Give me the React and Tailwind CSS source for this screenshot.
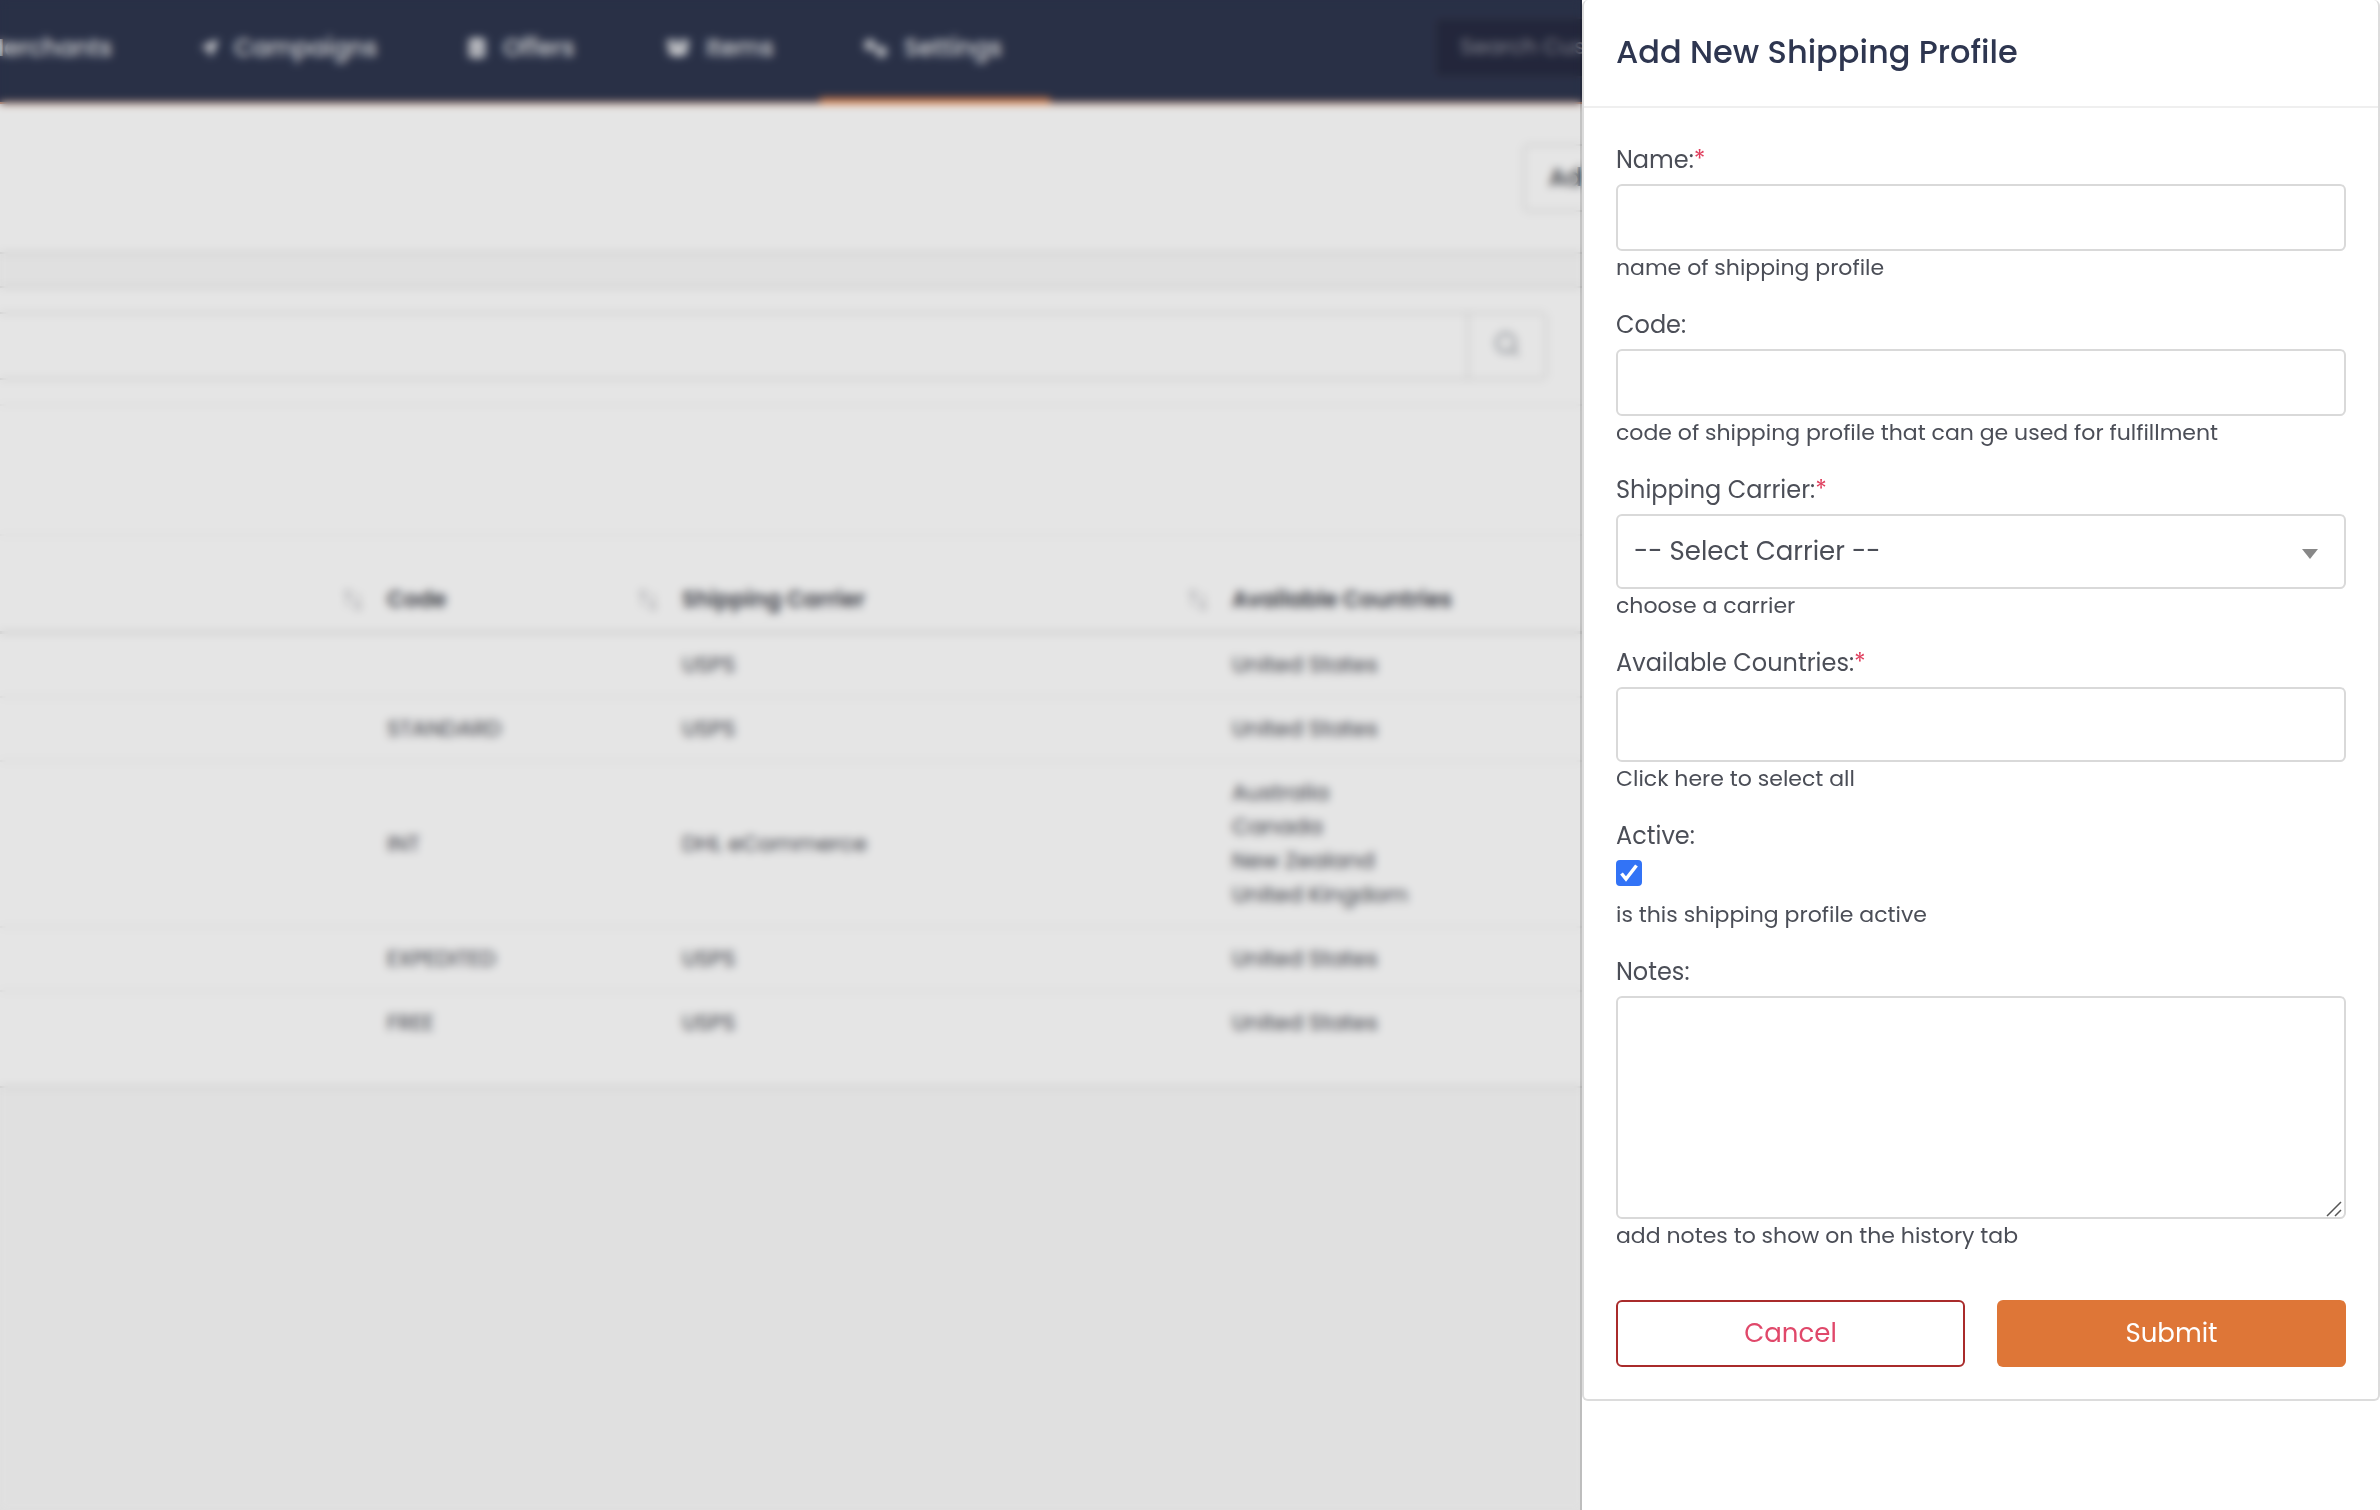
import { FaBoxOpen, FaDatabase, FaLocationArrow } from "react-icons/fa";
import { FaGears } from "react-icons/fa6";
import { Search } from "lucide-react";

const navItems = [
  { label: "Campaigns", icon: FaLocationArrow, width: "w-[269px] pl-12", size: "size-4" },
  { label: "Offers", icon: FaDatabase, width: "w-[199px] pl-11", size: "size-5" },
  { label: "Items", icon: FaBoxOpen, width: "w-[198px] pl-11", size: "size-6" },
  { label: "Settings", icon: FaGears, width: "w-[230px] pl-11", size: "size-6", active: true },
];

const rows = [
  { code: "", carrier: "USPS", countries: ["United States"] },
  { code: "STANDARD", carrier: "USPS", countries: ["United States"] },
  { code: "INT", carrier: "DHL eCommerce", countries: ["Australia", "Canada", "New Zealand", "United Kingdom"] },
  { code: "EXPEDITED", carrier: "USPS", countries: ["United States"] },
  { code: "FREE", carrier: "USPS", countries: ["United States"] },
];

function SortIcon() {
  return (
    <svg viewBox="0 0 20 22" className="h-[22px] w-5 fill-none stroke-[#b8b8bc] stroke-2">
      <path d="M5 17V2M2 5l3-3 3 3M15 5v15M12 17l3 3 3-3" />
    </svg>
  );
}

function HeaderCell({ children, width, sortable = true }) {
  return (
    <th scope="col" className={`h-24 border-b-[3px] border-[#e4e4e4] px-3 pb-3.5 align-bottom font-semibold ${width}`}>
      <span className="flex min-h-[34px] items-center justify-between">
        <span>{children}</span>
        {sortable && <SortIcon />}
      </span>
    </th>
  );
}

function TopNav() {
  return (
    <header className="flex h-[104px] items-stretch border-b-2 border-[#dd9068] bg-[#2e364f] text-[24px] font-medium text-white/90">
      <nav className="flex items-stretch">
        <a href="#merchants" className="flex w-[154px] items-center justify-end overflow-hidden pr-[42px] pb-1.5">
          Merchants
        </a>
        {navItems.map(({ label, icon: Icon, width, size, active }) => (
          <a
            key={label}
            href={`#${label.toLowerCase()}`}
            className={`-mb-0.5 flex items-center gap-4 border-b-[6px] pb-0.5 ${active ? "border-[#f08a4c]" : "border-transparent"} ${width}`}
          >
            <Icon className={size} />
            {label}
          </a>
        ))}
      </nav>
      <input
        aria-label="Search customers"
        placeholder="Search Customers"
        className="mt-[17px] ml-auto h-[61px] w-[148px] rounded-l-md border-2 border-r-0 border-[#373a4e] bg-[#272b42] pb-0.5 pl-6 text-[22px] font-normal placeholder:text-white/50"
      />
    </header>
  );
}

function ProfilesPage() {
  return (
    <div className="relative min-w-0 flex-1 overflow-hidden bg-[#fafafa]">
      <TopNav />
      <div className="flex h-[150px] items-center justify-end border-b-2 border-[#e2e2e2] bg-white">
        <button
          type="button"
          className="flex h-[68px] w-[59px] items-center overflow-hidden rounded-l-md border-2 border-r-0 border-[#e2e2e2] pl-6 text-[24px] font-medium whitespace-nowrap text-[#33363d]"
        >
          Add
        </button>
      </div>
      <main className="mt-8 border-y-2 border-[#e2e2e2] bg-white pb-8">
        <div className="border-b-2 border-[#f4f4f4] py-6 pr-[35px]">
          <form className="flex h-[68px] rounded-r-md border-2 border-l-0 border-[#e2e2e2]">
            <input aria-label="Search profiles" className="min-w-0 flex-1 px-4 text-[22px]" />
            <button type="button" aria-label="Search" className="flex w-[78px] items-center justify-center border-l-2 border-[#e2e2e2] pb-1">
              <Search className="size-7 text-[#8f949c]" />
            </button>
          </form>
        </div>
        <div className="h-[130px] border-b-2 border-[#f6f6f6]" />
        <table className="w-full table-fixed text-left text-[22px] leading-[34px] text-[#43454e]">
          <thead>
            <tr>
              <HeaderCell width="w-[375px]" />
              <HeaderCell width="w-[295px]">Code</HeaderCell>
              <HeaderCell width="w-[550px]">Shipping Carrier</HeaderCell>
              <HeaderCell sortable={false} width="w-auto">Available Countries</HeaderCell>
            </tr>
          </thead>
          <tbody>
            {rows.map(({ code, carrier, countries }, index) => (
              <tr key={index} className="border-b-2 border-[#f2f2f2] last:border-b-0">
                <td />
                <td className="px-3 py-3.5">{code}</td>
                <td className="px-3 py-3.5">{carrier}</td>
                <td className="px-3 py-3.5">
                  {countries.map((country) => (
                    <div key={country}>{country}</div>
                  ))}
                </td>
              </tr>
            ))}
          </tbody>
        </table>
      </main>
      <div className="absolute inset-0 bg-black/10 backdrop-blur-[4px]" />
    </div>
  );
}

function Field({ id, label, required, help, children }) {
  return (
    <div className="mb-7">
      <label htmlFor={id} className="mb-[11px] block text-[24px] leading-[26px]">
        {label}:{required && <span className="text-[#e0405f]">*</span>}
      </label>
      {children}
      <p className="text-[22px] leading-[33px]">{help}</p>
    </div>
  );
}

const boxStyle = "block w-full rounded-md border-2 border-[#d9d9d9] bg-white";

function ShippingProfilePanel() {
  return (
    <aside className="relative z-10 w-[798px] shrink-0 bg-white shadow-[-2px_0_0_rgba(0,0,0,0.15)]">
      <section className="rounded-md border-2 border-t-0 border-[#dcdcdc]">
        <h2 className="flex h-[108px] items-center border-b-2 border-[#efefef] px-8 pb-0.5 text-[32px] font-medium text-[#2e3650]">
          Add New Shipping Profile
        </h2>
        <form className="px-8 pt-[39px] pb-8 text-[#4b4e57]">
          <Field id="name" label="Name" required help="name of shipping profile">
            <input id="name" className={`${boxStyle} h-[67px] px-4 text-[26px]`} />
          </Field>
          <Field id="code" label="Code" help="code of shipping profile that can ge used for fulfillment">
            <input id="code" className={`${boxStyle} h-[67px] px-4 text-[26px]`} />
          </Field>
          <Field id="carrier" label="Shipping Carrier" required help="choose a carrier">
            <div className="relative">
              <select id="carrier" className={`${boxStyle} h-[75px] appearance-none px-4 text-[26px]`}>
                <option>-- Select Carrier --</option>
              </select>
              <svg viewBox="0 0 16 10" className="pointer-events-none absolute top-[35px] right-7 h-2.5 w-4 fill-[#888888]">
                <path d="M0 0h16L8 10z" />
              </svg>
            </div>
          </Field>
          <Field id="countries" label="Available Countries" required help="Click here to select all">
            <input id="countries" className={`${boxStyle} h-[75px] px-4 text-[26px]`} />
          </Field>
          <Field id="active" label="Active" help="is this shipping profile active">
            <div className="relative mb-3 size-[26px]">
              <input
                id="active"
                type="checkbox"
                defaultChecked
                className="peer block size-full appearance-none rounded border-2 border-[#d9d9d9] checked:border-[#3273f6] checked:bg-[#3273f6]"
              />
              <svg
                viewBox="0 0 26 26"
                className="pointer-events-none absolute inset-0 hidden fill-none stroke-white stroke-[3.5px] peer-checked:block"
              >
                <path d="M5.500 13.500l4.500 5.500L20.500 5.500" />
              </svg>
            </div>
          </Field>
          <Field id="notes" label="Notes" help="add notes to show on the history tab">
            <div className="relative">
              <textarea id="notes" className={`${boxStyle} h-[223px] resize-none p-4 text-[26px]`} />
              <svg
                viewBox="0 0 16 16"
                className="pointer-events-none absolute right-1 bottom-0.5 size-4 fill-none stroke-[#555555] stroke-[1.5px]"
              >
                <path d="M1 15L15 1M9 15l6-6" />
              </svg>
            </div>
          </Field>
          <div className="mt-12 grid grid-cols-2 gap-8 text-[26px]">
            <button type="button" className="h-[67px] rounded-md border-2 border-[#a92b2b] text-[#e0486a]">
              Cancel
            </button>
            <button type="submit" className="h-[67px] rounded-md bg-[#de7637] text-white">
              Submit
            </button>
          </div>
        </form>
      </section>
    </aside>
  );
}

export default function App() {
  return (
    <div className="flex min-h-screen bg-white font-['Poppins','Inter',sans-serif]">
      <ProfilesPage />
      <ShippingProfilePanel />
    </div>
  );
}
